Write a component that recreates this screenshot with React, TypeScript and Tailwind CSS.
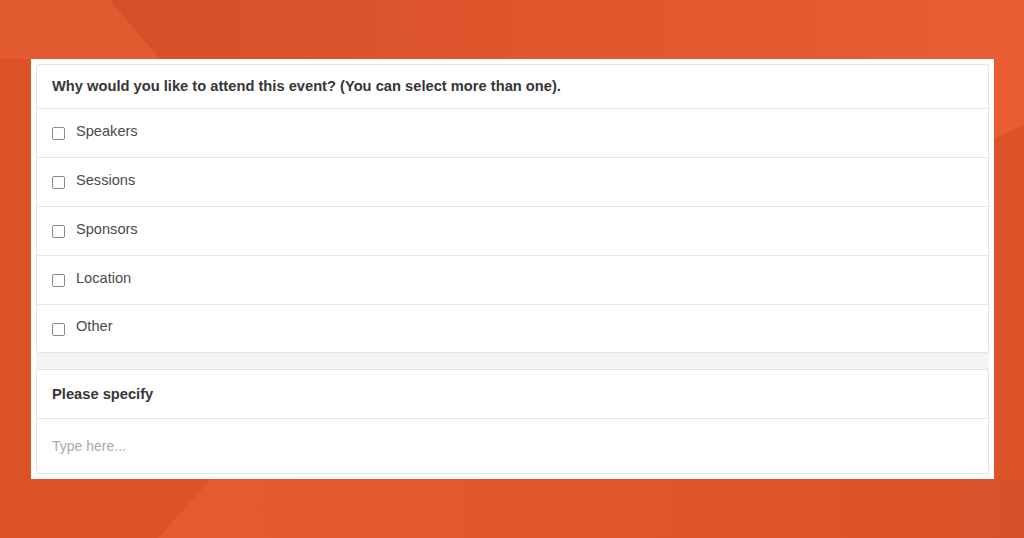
import React from "react";

const options = ["Speakers", "Sessions", "Sponsors", "Location", "Other"];

function Backdrop() {
  return (
    <svg
      className="absolute inset-0 h-full w-full"
      viewBox="0 0 1024 538"
      preserveAspectRatio="none"
    >
      <defs>
        <linearGradient id="topWedge" x1="0" y1="0" x2="1" y2="0">
          <stop offset="0" stopColor="#d64f29" />
          <stop offset="0.5" stopColor="#e0572d" />
          <stop offset="1" stopColor="#e95e32" />
        </linearGradient>
        <linearGradient id="bottomWedge" x1="0" y1="0" x2="1" y2="0">
          <stop offset="0" stopColor="#e65c31" />
          <stop offset="0.6" stopColor="#e0562c" />
          <stop offset="1" stopColor="#d95128" />
        </linearGradient>
      </defs>
      <rect width="1024" height="538" fill="#dc5329" />
      <polygon points="0,0 110,0 160,59 0,59" fill="#e25a2f" />
      <polygon points="110,0 1024,0 1024,125 990,140 160,59" fill="url(#topWedge)" />
      <polygon points="212,478 1024,478 1024,538 158,538" fill="url(#bottomWedge)" />
    </svg>
  );
}

export default function App() {
  return (
    <div
      className="relative h-[538px] w-[1024px] overflow-hidden"
      style={{ fontFamily: '"Liberation Sans", Arial, sans-serif' }}
    >
      <Backdrop />
      <div className="relative pl-[31px] pt-[59px]">
        <div className="flex w-[963px] flex-col gap-[16px] bg-[#f4f4f4] p-[5px] shadow-[0_0_0_5px_#ffffff_inset]">
          <div className="rounded-[3px] border border-[#e4e4e4] bg-white">
            <div className="flex h-[44px] items-center border-b border-[#e8e8e8] px-[15px] text-[14.7px] font-bold text-[#363636]">
              Why would you like to attend this event? (You can select more than one).
            </div>
            {options.map((o, i) => (
              <label
                key={o}
                className={
                  "flex items-center gap-[11px] px-[15px] text-[14.6px] text-[#4a4a4a] " +
                  (i < options.length - 1 ? "h-[49px] border-b border-[#e8e8e8]" : "h-[47px]")
                }
              >
                <span className="mt-[1px] h-[13px] w-[13px] rounded-[2px] border border-[#8a8a8a] bg-white" />
                <span className="-mt-[3px]">{o}</span>
              </label>
            ))}
          </div>
          <div className="rounded-[3px] border border-[#e4e4e4] bg-white">
            <div className="flex h-[49px] items-center border-b border-[#e8e8e8] px-[15px] text-[14.7px] font-bold text-[#363636]">
              Please specify
            </div>
            <div className="flex h-[54px] items-center px-[15px]">
              <input
                className="w-full bg-transparent text-[14px] text-[#444] outline-none placeholder:text-[#aaa]"
                placeholder="Type here..."
              />
            </div>
          </div>
        </div>
      </div>
    </div>
  );
}
